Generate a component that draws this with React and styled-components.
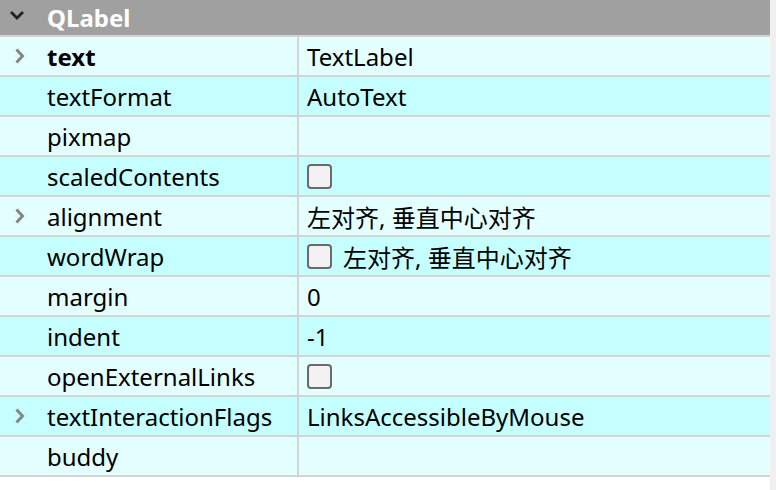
import React from 'react';
import styled, { createGlobalStyle } from 'styled-components';

const GlobalStyle = createGlobalStyle`
  html, body {
    margin: 0;
    padding: 0;
    background: #fff;
  }
  body {
    font-family: 'Noto Sans', 'Noto Sans CJK SC', sans-serif;
    font-size: 24px;
    color: #000;
  }
`;

const Frame = styled.div`
  display: flex;
  width: 776px;
  height: 490px;
  overflow: hidden;
`;

const Browser = styled.div`
  flex: 0 0 770px;
  display: flex;
  flex-direction: column;
`;

const Strip = styled.div`
  flex: 1;
  background: #f0f0f0;
`;

const GroupHeader = styled.div`
  height: 35px;
  display: flex;
  align-items: center;
  background: #a0a0a0;
  border-bottom: 2px solid #d4d4d4;
  color: #fff;
  font-weight: 700;

  svg {
    width: 47px;
    flex: 0 0 47px;
  }
`;

const Row = styled.div`
  height: 38px;
  display: flex;
  background: ${p => (p.$alt ? '#c6ffff' : '#e4ffff')};
  border-bottom: 2px solid #d4d4d4;
`;

const NameCell = styled.div`
  flex: 0 0 297px;
  display: flex;
  align-items: center;
  border-right: 2px solid #d4d4d4;
  font-weight: ${p => (p.$bold ? 700 : 400)};
  white-space: nowrap;
`;

const Expander = styled.span`
  flex: 0 0 47px;
  display: flex;
  align-items: center;
  padding-left: 14px;
  box-sizing: border-box;
`;

const ValueCell = styled.div`
  flex: 1;
  display: flex;
  align-items: center;
  gap: 11px;
  padding-left: 8px;
  white-space: nowrap;
`;

const CheckBox = styled.span`
  width: 25px;
  height: 25px;
  box-sizing: border-box;
  border: 2px solid #6a6a6a;
  border-radius: 4px;
  background: #f2f2f2;
`;

const Chevron = () => (
  <svg width="12" height="16" viewBox="0 0 12 16">
    <path d="M2.5 1.5 L8.5 8 L2.5 14.5" fill="none" stroke="#858585" strokeWidth="3" />
  </svg>
);

const props = [
  { name: 'text', value: 'TextLabel', expand: true, bold: true },
  { name: 'textFormat', value: 'AutoText' },
  { name: 'pixmap', value: '' },
  { name: 'scaledContents', check: true },
  { name: 'alignment', value: '左对齐, 垂直中心对齐', expand: true },
  { name: 'wordWrap', check: true, value: '左对齐, 垂直中心对齐' },
  { name: 'margin', value: '0' },
  { name: 'indent', value: '-1' },
  { name: 'openExternalLinks', check: true },
  { name: 'textInteractionFlags', value: 'LinksAccessibleByMouse', expand: true },
  { name: 'buddy', value: '' },
];

export default function App() {
  return (
    <>
      <GlobalStyle />
      <Frame>
        <Browser>
          <GroupHeader>
            <svg height="35" viewBox="0 0 47 35">
              <path d="M11 12 L17 18 L23 12" fill="none" stroke="#222" strokeWidth="2.8" />
            </svg>
            QLabel
          </GroupHeader>
          {props.map((p, i) => (
            <Row key={p.name} $alt={i % 2 === 1}>
              <NameCell $bold={p.bold}>
                <Expander>{p.expand && <Chevron />}</Expander>
                {p.name}
              </NameCell>
              <ValueCell>
                {p.check && <CheckBox />}
                {p.value}
              </ValueCell>
            </Row>
          ))}
        </Browser>
        <Strip />
      </Frame>
    </>
  );
}
